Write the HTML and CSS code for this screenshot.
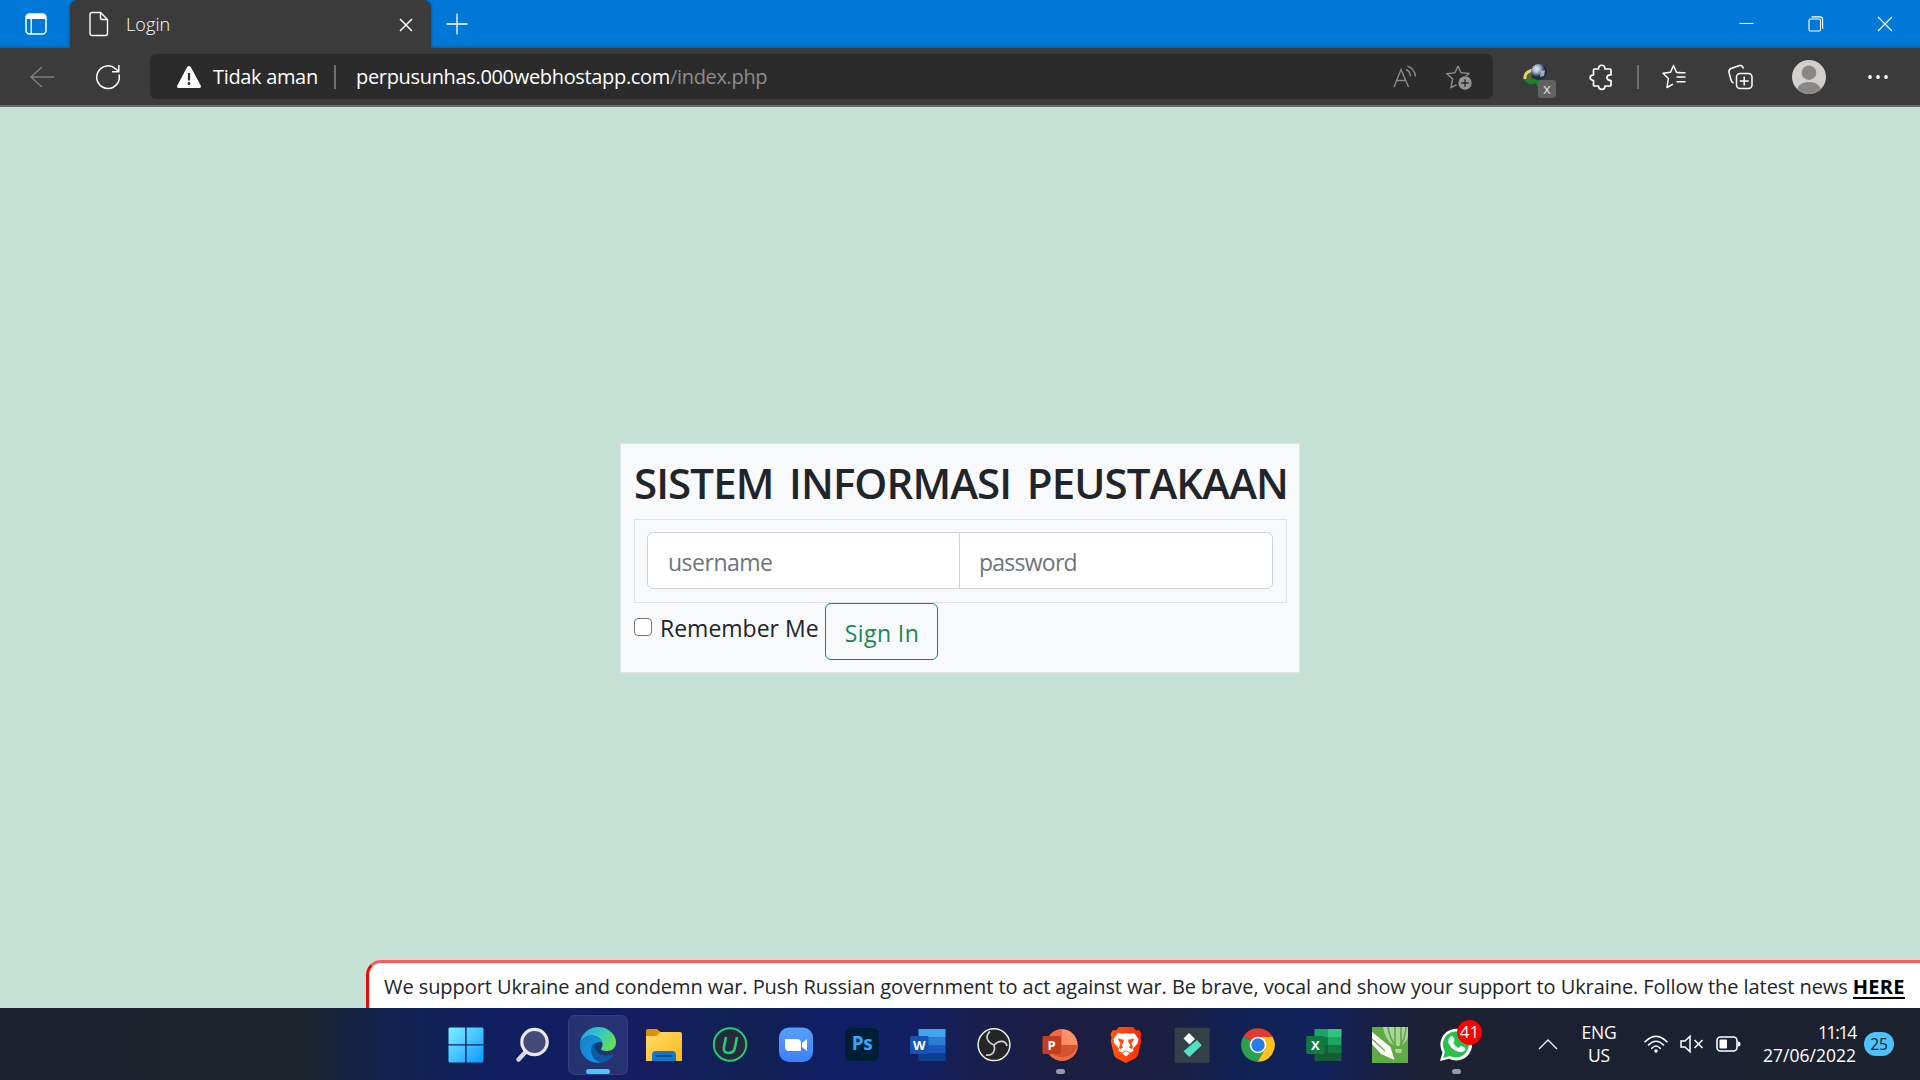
FILE: index.html
```
<!DOCTYPE html>
<html lang="id">
<head>
<meta charset="utf-8">
<title>Login</title>
<link rel="stylesheet" href="styles.css">
</head>
<body>
<header class="tabstrip">
  <svg class="tab-actions" width="22" height="22" viewBox="0 0 22 22"><rect x="1" y="1" width="20" height="20" rx="3.500" fill="none" stroke="#fff" stroke-width="1.500"/><path d="M1 6V4a3 3 0 0 1 3-3h14a3 3 0 0 1 3 3v2z" fill="#fff"/><path d="M6.200 6v15" stroke="#fff" stroke-width="1.300"/></svg>
  <div class="tab">
    <svg width="20" height="26" viewBox="0 0 20 26" fill="none" stroke="#fff" stroke-width="1.400"><path d="M3 1.500h8.500L18.500 8.500V22.500a2 2 0 0 1-2 2H3a2 2 0 0 1-2-2V3.500a2 2 0 0 1 2-2z"/><path d="M11.500 1.500V7a1.500 1.500 0 0 0 1.500 1.500h5.500"/></svg>
    <span class="tab-title">Login</span>
    <svg class="tab-close" width="14" height="14" viewBox="0 0 14 14" stroke="#fff" stroke-width="1.500"><path d="M1 1l12 12M13 1L1 13"/></svg>
  </div>
  <svg class="new-tab" width="22" height="22" viewBox="0 0 22 22" stroke="#fff" stroke-width="1.300"><path d="M11 .5v21M.5 11h21"/></svg>
  <div class="window-controls">
    <svg width="15" height="16" viewBox="0 0 15 16" stroke="#fff"><path d="M.5 7.500h14"/></svg>
    <svg width="16" height="16" viewBox="0 0 16 16" fill="none" stroke="#fff" stroke-width="1.100"><rect x="1" y="3" width="11.500" height="12" rx="1.500"/><path d="M3.500.9h8.300a2.800 2.800 0 0 1 2.800 2.800v9"/></svg>
    <svg width="16" height="16" viewBox="0 0 16 16" stroke="#fff" stroke-width="1.100"><path d="M1 1l14 14M15 1L1 15"/></svg>
  </div>
</header>

<nav class="toolbar">
  <svg class="back" width="24" height="22" viewBox="0 0 24 22" fill="none" stroke="#808080" stroke-width="1.400"><path d="M12 1L1 11l11 10M1 11h23"/></svg>
  <svg class="reload" width="26" height="26" viewBox="0 0 26 26" fill="none" stroke="#fff" stroke-width="1.500"><path d="M24 10.500A11.300 11.300 0 1 1 20.500 4.700L23.800 7.500"/><path d="M23.800 1v6.700H17"/></svg>
  <div class="address">
    <svg class="warn" width="24" height="22" viewBox="0 0 24 22"><path d="M10.200.9Q12-.9 13.800.9L23.700 19.500Q24.500 22 22.300 22H1.700Q-.5 22 .3 19.500z" fill="#fff"/><path d="M12 7v7.500" stroke="#2b2b2b" stroke-width="2.200"/><circle cx="12" cy="17.500" r="1.400" fill="#2b2b2b"/></svg>
    <span class="security">Tidak aman</span>
    <i class="sep"></i>
    <span class="url">perpusunhas.000webhostapp.com<span class="path">/index.php</span></span>
    <svg class="read" width="24" height="24" viewBox="0 0 24 24" fill="none" stroke="#8d8d8d" stroke-width="1.400"><path d="M1 22L8 4.500 15.500 22M3.500 15.500h9.300M13 4.500Q17 6 17.500 11.500M14.500 1.200Q21.500 3.500 22.500 11.500"/></svg>
    <svg class="star" width="26" height="26" viewBox="0 0 26 26"><path d="M12 2L15 8.700 23.500 9.500M12 2L9 8.700 1 9.800 6.600 15 5 23.500 10.500 20.800M23.500 9.500 20 12" fill="none" stroke="#8d8d8d" stroke-width="1.400"/><circle cx="19" cy="19" r="6.700" fill="#949494"/><path d="M19 15.300v7.400M15.300 19h7.400" stroke="#2b2b2b" stroke-width="1.400"/></svg>
  </div>
  <div class="idm">
    <svg width="26" height="26" viewBox="0 0 26 26"><defs><radialGradient id="globe" cx=".35" cy=".3"><stop stop-color="#f4f8ff"/><stop offset=".55" stop-color="#88a3cb"/><stop offset="1" stop-color="#1c2c4b"/></radialGradient></defs><path d="M11 5C1 5-2 14 3 18q4 4 10 1l1 4 5-3-2-7-7 2q-4-1 2-9" fill="#168427"/><path d="M10 6Q1 8 2 15" fill="none" stroke="#e6cf73" stroke-width="3"/><path d="M12 8Q6 10 6 15" fill="none" stroke="#c03931" stroke-width="1.800"/><circle cx="16" cy="8" r="8" fill="url(#globe)"/><path d="M10 4l4 1 1 3-2 1zM18 7l4-1-1 6-4 1z" fill="#d7d4b0" opacity=".75"/></svg>
    <b>x</b>
  </div>
  <svg class="puzzle" width="24" height="26" viewBox="0 0 24 26" fill="none" stroke="#fff" stroke-width="1.700" stroke-linejoin="round"><path d="M5.500 5h4c0-5 6.500-5 6.500 0H21q1 0 1 1v5c-5-1-6 5.500 0 5.500v4.500q0 1-1 1h-5c0 4.500-6.500 4.500-6.500 0h-4q-1 0-1-1v-4.500c-4.500-.5-4.500-5.500 0-5.500V6q0-1 1-1z"/></svg>
  <i class="sep"></i>
  <svg class="favs" width="24" height="25" viewBox="0 0 24 25" fill="none" stroke="#fff" stroke-width="1.500" stroke-linejoin="round"><path d="M18.500 8.600L14.500 8.200 11.500 1.500 8.500 8.200 1 9.300 6.400 14.500 5 23.500 11 20.200M14.500 13h9M14.500 8.700h9M14.500 17.700h9"/></svg>
  <svg class="collections" width="25" height="26" viewBox="0 0 25 26" fill="none" stroke="#fff" stroke-width="1.500"><path d="M5.500 19.200Q3.500 18 3 16L1 8.500Q.5 5.500 3 4.500L11.500 1.600Q14.500 1 15.500 4.500"/><rect x="8.500" y="9.500" width="15.500" height="15" rx="3.500"/><path d="M16.200 12.500v9M11.700 17h9"/></svg>
  <svg class="avatar" width="34" height="34" viewBox="0 0 34 34"><defs><clipPath id="av"><circle cx="17" cy="17" r="17"/></clipPath></defs><g clip-path="url(#av)"><rect width="34" height="34" fill="#d2d0ce"/><circle cx="17" cy="12.700" r="7.300" fill="#8a8886"/><path d="M4 34q1-12 13-12t13 12z" fill="#8a8886"/></g></svg>
  <svg class="more" width="20" height="6" viewBox="0 0 20 6" fill="#fff"><circle cx="2" cy="3" r="1.900"/><circle cx="10" cy="3" r="1.900"/><circle cx="18" cy="3" r="1.900"/></svg>
</nav>

<main class="page">
  <form class="card">
    <h1>SISTEM INFORMASI PEUSTAKAAN</h1>
    <div class="fields">
      <input class="field user" type="text" placeholder="username">
      <input class="field pass" type="password" placeholder="password">
    </div>
    <div class="actions">
      <input class="check" type="checkbox" id="remember">
      <label for="remember">Remember Me</label>
      <button type="button">Sign In</button>
    </div>
  </form>
  <div class="notice">We support Ukraine and condemn war. Push Russian government to act against war. Be brave, vocal and show your support to Ukraine. Follow the latest news <a>HERE</a></div>
</main>

<footer class="taskbar">
  <div class="apps">
    <div class="app"><svg width="36" height="36" viewBox="0 0 36 36"><defs><linearGradient id="win" x2="36" y2="36" gradientUnits="userSpaceOnUse"><stop stop-color="#7df3ff"/><stop offset="1" stop-color="#0c95ff"/></linearGradient></defs><path d="M1.500.5H17.200V17.200H.5V1.500zM18.600.5h16l.9 1V17.200H18.600zM.5 18.600H17.200V35.500H1.500l-1-1zM18.600 18.600H35.500v16l-1 .9H18.600z" fill="url(#win)"/></svg></div>
    <div class="app"><svg width="36" height="36" viewBox="0 0 36 36"><path d="M12 24.500L4.500 32.500" stroke="#d5d7dc" stroke-width="4.500" stroke-linecap="round"/><circle cx="20.500" cy="15" r="12.700" fill="#414a78" stroke="#e9eaee" stroke-width="3.200"/></svg></div>
    <div class="app active"><svg width="36" height="36" viewBox="0 0 36 36"><defs><linearGradient id="e1" y1=".2" y2=".6"><stop stop-color="#27a5e8"/><stop offset=".5" stop-color="#35c6c7"/><stop offset="1" stop-color="#67e34c"/></linearGradient><linearGradient id="e2" y2="1"><stop stop-color="#1683c8"/><stop offset="1" stop-color="#1196ec"/></linearGradient></defs><path d="M12 11H21L24 25 14 27z" fill="#143870"/><path d="M0 18C0 7 9 0 18 0 29 0 36 8 36 15c0 6-4 9-9 9-4 0-6-1-6-2s1.500-2 1.500-4.500C22.500 13 18 8.500 11.500 8.500 6 8.500 1 12 0 18z" fill="url(#e1)"/><path d="M0 18C0 12 6 8.700 11.500 8.700 17 8.700 21.500 12 22.200 15.300 16 13.500 14 18 14 21c0 7 5 13 10 14C11 38.500 0 30 0 18z" fill="url(#e2)"/><path d="M17 15.500C11 17 10.500 22 11.500 26.500 13.500 33 19 36 24 35c4.500-1 8-4.500 9.500-7 .5-1 0-1.300-1-.8C26 30 18 28.500 15.300 22c-.8-2.500 0-5 1.700-6.500z" fill="#0d58a3"/></svg><i class="run"></i></div>
    <div class="app"><svg width="36" height="36" viewBox="0 0 36 36"><defs><linearGradient id="fo" y2="1"><stop stop-color="#ffdb6b"/><stop offset="1" stop-color="#fcb81c"/></linearGradient></defs><path d="M0 4q0-2 2-2h9l4 3.500V12H0z" fill="#d99500"/><path d="M0 9h10.500l4-4H34q2 0 2 2v27H0z" fill="url(#fo)"/><path d="M6 34V28q0-4 4-4h16q4 0 4 4v6z" fill="#1277c8"/><path d="M11 29h14" stroke="#0b4a8c" stroke-width="1.800" stroke-linecap="round"/></svg></div>
    <div class="app"><svg width="36" height="36" viewBox="0 0 36 36"><circle cx="18" cy="17.500" r="16.200" fill="#262a3c" stroke="#23cf73" stroke-width="1.900"/><path d="M14 10L12 20Q10.800 26 16.500 26T23 20L25 10" fill="none" stroke="#23cf73" stroke-width="2.600"/></svg></div>
    <div class="app"><svg width="36" height="36" viewBox="0 0 36 36"><defs><linearGradient id="zo" y2="1" x2="0"><stop stop-color="#57a0f8"/><stop offset="1" stop-color="#3c80ff"/></linearGradient></defs><rect x="1" y=".5" width="34" height="34.500" rx="10" fill="url(#zo)"/><path d="M7 12h12q4 0 4 4v8H11q-4 0-4-4zM24 16l5-4v12l-5-4z" fill="#fff"/></svg></div>
    <div class="app"><div class="ps">Ps</div></div>
    <div class="app"><svg width="36" height="36" viewBox="0 0 36 36"><path d="M8.500 2h27v8h-27z" fill="#41a5ee"/><path d="M8.500 10h27v8h-27z" fill="#2b7cd3"/><path d="M8.500 18h27v8h-27z" fill="#185abd"/><path d="M8.500 26h27v8h-27z" fill="#103f91"/><rect y="9" width="18.500" height="18" rx="1.500" fill="#1853b4"/><text class="office" x="9.200" y="22.500">W</text></svg></div>
    <div class="app"><svg width="36" height="36" viewBox="0 0 36 36"><circle cx="18" cy="17.700" r="15.900" fill="#262527" stroke="#f1f1f1" stroke-width="1.500"/><g fill="none" stroke="#d0d0d0" stroke-width="1.700"><path d="M18 18C9 14 10 8 14 4.500"/><path d="M18 18C24 12 30 14 31 19"/><path d="M18 18C20 26 15 29 10 28"/></g></svg></div>
    <div class="app"><svg width="36" height="36" viewBox="0 0 36 36"><path d="M20 2A16 16 0 0 0 20 34 16 16 0 0 0 36 18z" fill="#ed6c47"/><path d="M20 2a16 16 0 0 1 15.500 16H20z" fill="#ff8f6b"/><path d="M4.500 18h31a16 16 0 0 1-31 0z" fill="#d35230"/><rect x=".5" y="9" width="18.500" height="18" rx="1.500" fill="#c43e1c"/><text class="office" x="9.700" y="22.500">P</text></svg><i class="dot"></i></div>
    <div class="app"><svg width="36" height="36" viewBox="0 0 36 36"><defs><linearGradient id="br" x2="1"><stop stop-color="#ff5a12"/><stop offset="1" stop-color="#ff2a08"/></linearGradient></defs><path d="M11 0h14l3 3.500 3-.5 2.500 4-1 4 .8 3L30 28q-1 2-3 3.500L18 36l-9-4.500Q7 30 6 28L2.700 14l.8-3-1-4L5 3l3 .5z" fill="url(#br)"/><path d="M10 6l4 .8 4-.8 4 .8 4-.8 4.500 6-1 4.500-4.500 5 .5 2.500-3 1.500-4.500-2-4.500 2-3-1.500.5-2.500-4.500-5-1-4.500z" fill="#fff"/><path d="M18 24.300l4 2-4 3.200-4-3.200z" fill="#fff"/><path d="M9.500 11.500l6.500 1.300-.8 3.200-1.500 2 1.300 2.500-2.500 1.500-1.300-1 .3-2.500 1-2zM26.500 11.500L20 12.800l.8 3.200 1.500 2-1.300 2.500 2.500 1.500 1.300-1-.3-2.500-1-2z" fill="#ff4a11"/></svg></div>
    <div class="app"><svg width="36" height="36" viewBox="0 0 36 36"><rect x=".7" y=".7" width="35" height="35" rx="1" fill="#33404a"/><path d="M15 6l6 6-5.500 5.500-6-6z" fill="#fff"/><path d="M23 13l4.800 5.200L15.300 30 9.500 24.200z" fill="#50e3c2"/></svg></div>
    <div class="app"><svg width="36" height="36" viewBox="0 0 36 36"><path d="M18 18L3.400 9.800A16.700 16.700 0 0 1 32.600 9.800z" fill="#e33b2e"/><path d="M18 18L3.400 9.500A16.700 16.700 0 0 0 17.500 34.700L25 22z" fill="#2aa24c"/><path d="M18 9.800H32.600A16.700 16.700 0 0 1 17.500 34.700L25 22z" fill="#fcc31e"/><path d="M18 9.800h14.600L31 8.500H9z" fill="#e33b2e"/><circle cx="18" cy="18" r="8.300" fill="#fff"/><circle cx="18" cy="18" r="6.700" fill="#2b7bea"/></svg></div>
    <div class="app"><svg width="36" height="36" viewBox="0 0 36 36"><path d="M8.500 2h13.500v8H8.500z" fill="#21a366"/><path d="M22 2h13.500v8H22z" fill="#33c481"/><path d="M8.500 10H22v8H8.500z" fill="#107c41"/><path d="M22 10h13.500v8H22z" fill="#21a366"/><path d="M8.500 18h27v16h-27z" fill="#185c37"/><path d="M22 18h13.500v8H22z" fill="#107c41"/><rect x=".2" y="9" width="18.500" height="18" rx="1.500" fill="#107c41"/><text class="office" x="9.400" y="22.500">X</text></svg></div>
    <div class="app"><svg width="36" height="36" viewBox="0 0 36 36"><path d="M0 0h36v36H0z" fill="#61ab45"/><path d="M11 0Q13 14 23 19h6Q36 14 36 8V0z" fill="#acd49c"/><path d="M16 0q2 13 8 19M23 0v19M29 0v19M34 0q-1 13-6 19" fill="none" stroke="#61ab45" stroke-width="1.700"/><path d="M23 22h6.500v4H24z" fill="#acd49c"/><path d="M0 5L18.500 20 22.500 33 9 27 0 17z" fill="#fff"/><path d="M0 12l13 12" stroke="#61ab45" stroke-width="1.200"/></svg></div>
    <div class="app"><svg width="36" height="36" viewBox="0 0 36 36"><path d="M2 34L4.500 25.500A15.900 15.900 0 1 1 11 31.700z" fill="#fff"/><path d="M5 31l2-6.500A13 13 0 1 1 12 29z" fill="#25c14c"/><path d="M12 10q2-2 3.500.5l1 2.500q.3 1-1.300 2.700 2 4 5.500 5.300l2-2q1-.5 4.500 2 1 1-1 3-2.500 2-6.500.500-6.500-2-9.500-9-.5-3.500 1.800-5.500z" fill="#fff"/></svg><b class="count">41</b><i class="dot"></i></div>
  </div>
  <svg class="chevron" width="20" height="12" viewBox="0 0 20 12" fill="none" stroke="#eee" stroke-width="1.400"><path d="M1 11l9-9 9 9"/></svg>
  <div class="lang">ENG<br>US</div>
  <svg class="wifi" width="24" height="18" viewBox="0 0 24 18" fill="none" stroke="#fff" stroke-width="1.600" stroke-linecap="round"><path d="M1 6.800q11-11 22 0M4.500 10q7.500-7.500 15 0M7.800 13.300q4.200-4.500 8.400 0"/><circle cx="12" cy="16" r="1.700" fill="#fff" stroke="none"/></svg>
  <svg class="sound" width="24" height="18" viewBox="0 0 24 18" fill="none" stroke="#fff" stroke-width="1.500"><path d="M1 6h4l5-4.700v15.400L5 12H1zM14.500 5l8 8M22.500 5l-8 8"/></svg>
  <svg class="battery" width="25" height="16" viewBox="0 0 25 16"><rect x="1" y="1" width="20" height="14" rx="3.500" fill="none" stroke="#fff" stroke-width="1.600"/><rect x="3.500" y="3.500" width="7.500" height="9" rx="1" fill="#fff"/><path d="M22 5.500q2.500 0 2.500 2.500T22 10.500z" fill="#fff"/></svg>
  <div class="clock"><span class="time">11:14</span><br>27/06/2022</div>
  <span class="badge">25</span>
</footer>
</body>
</html>
```
FILE: styles.css
```
* { box-sizing: border-box; }
body {
  margin: 0;
  width: 1920px;
  height: 1080px;
  overflow: hidden;
  display: flex;
  flex-direction: column;
  font-family: "Open Sans", "Noto Sans", sans-serif;
  color: #212529;
}
svg { display: block; flex: none; overflow: visible; }

.tabstrip {
  flex: none;
  display: flex;
  align-items: center;
  height: 48px;
  background: linear-gradient(#0078d7 45px, #0066b6 48px);
}
.tab-actions { margin-left: 25px; }
.tab {
  display: flex;
  align-items: center;
  width: 361px;
  height: 48px;
  margin-left: 23px;
  padding: 0 18px 0 19px;
  background: #3b3b3b;
  border-radius: 8px 8px 0 0;
  box-shadow: 0 0 3px #00427a;
  clip-path: inset(0 -4px 0 -4px);
}
.tab-title {
  margin-left: 17px;
  color: #fff;
  font-size: 18px;
  font-weight: 300;
  letter-spacing: .1px;
  line-height: 24px;
}
.tab-close { margin-left: auto; margin-top: 2px; }
.new-tab { margin-left: 15px; }
.window-controls { display: flex; gap: 53px; margin-left: auto; padding-right: 27px; }
.window-controls svg:first-child { margin-right: 1px; }

.toolbar {
  flex: none;
  display: flex;
  align-items: center;
  height: 59px;
  padding-left: 30px;
  background: #3b3b3b;
  border-bottom: 2px solid #6b6b6b;
}
.reload { margin-left: 41px; }
.address {
  display: flex;
  align-items: center;
  width: 1343px;
  height: 45px;
  margin-left: 29px;
  padding-left: 27px;
  background: #2b2b2b;
  border-radius: 6px;
  color: #fff;
  font-size: 20px;
  letter-spacing: -.33px;
  white-space: nowrap;
}
.security { width: 121px; margin-left: 12px; }
.sep { flex: none; width: 2px; height: 24px; background: #6f6f6f; }
.url { margin-left: 20px; }
.path { color: #8d8d8d; }
.read { margin-left: auto; }
.star { margin: 0 21px 0 29px; }
.idm { position: relative; margin-left: 30px; }
.idm b {
  position: absolute;
  left: 15px;
  top: 16px;
  width: 18px;
  height: 18px;
  background: #616161;
  border-radius: 3px;
  color: #ddd;
  font-size: 15px;
  font-weight: 400;
  line-height: 17px;
  text-align: center;
}
.puzzle { margin: 0 24px 0 40px; }
.favs { margin-left: 23px; }
.collections { margin-left: 42px; }
.avatar { margin-left: 39px; }
.more { margin-left: 42px; }

.page {
  position: relative;
  flex: 1;
  display: flex;
  align-items: center;
  justify-content: center;
  background: #c5e1d5;
}
.card {
  width: 680px;
  height: 230px;
  padding: 12px 12px 12px 13px;
  background: #f8f9fa;
  border: 1px solid #dee2e6;
}
h1 {
  height: 63px;
  margin: 0;
  padding-top: 2px;
  font-size: 42px;
  font-weight: 600;
  letter-spacing: -.9px;
  word-spacing: 5.5px;
  line-height: 50px;
  white-space: nowrap;
}
.fields { display: flex; height: 84px; padding: 12px; border: 1px solid #dee2e6; }
.field {
  width: 313px;
  height: 57px;
  padding: 4px 20px 0;
  background: #fff;
  border: 1px solid #ced4da;
  font: 400 23px "Open Sans", sans-serif;
  letter-spacing: -.5px;
}
.field::placeholder { color: #6c757d; opacity: 1; }
.user { border-radius: 6px 0 0 6px; }
.pass { width: 314px; margin-left: -1px; padding-left: 19px; border-radius: 0 6px 6px 0; letter-spacing: -.75px; }
.actions { display: flex; align-items: flex-start; }
.check {
  appearance: none;
  width: 18px;
  height: 18px;
  margin: 15px 8px 0 0;
  background: #fff;
  border: 1.5px solid #767676;
  border-radius: 4px;
}
label { width: 165px; padding-top: 8px; font-size: 23px; letter-spacing: 0; line-height: 34px; white-space: nowrap; }
button {
  width: 113px;
  height: 57px;
  padding: 3px 0 0 1px;
  background: none;
  border: 1px solid #198754;
  border-radius: 6px;
  color: #198754;
  font: 400 23px "Open Sans", sans-serif;
  letter-spacing: .4px;
}
.notice {
  position: absolute;
  right: 0;
  bottom: 0;
  width: 1554px;
  height: 48px;
  padding-left: 15px;
  background: #fff;
  border-top: 3px solid #ff5a61;
  border-left: 3px solid #f00;
  border-top-left-radius: 15px;
  font-size: 20px;
  letter-spacing: -.07px;
  line-height: 47px;
  white-space: nowrap;
}
.notice a {
  display: inline-block;
  height: 24px;
  border-bottom: 2px solid #000;
  color: #000;
  font-weight: 700;
  letter-spacing: .2px;
  line-height: 23px;
}

.taskbar {
  flex: none;
  display: flex;
  align-items: center;
  height: 72px;
  padding-left: 433px;
  background: linear-gradient(90deg, #1b212d 0, #1c252e 300px, #14233f 345px, #11234d 380px, #101f5d 480px, #111e65 620px, #171c5e 650px, #11225a 700px, #102052 760px, #111f66 830px, #111f63 910px, #191e4e 980px, #1b1e40 1080px, #1a2043 1180px, #102153 1230px, #10225c 1320px, #171f46 1370px, #1c2133 1430px, #1b222e 100%);
}
.apps { display: flex; }
.app {
  position: relative;
  display: flex;
  align-items: center;
  justify-content: center;
  width: 66px;
  height: 72px;
  padding-top: 2px;
}
.active::before {
  content: "";
  position: absolute;
  inset: 7px 3px 5px;
  background: rgba(255, 255, 255, .09);
  border: 1px solid rgba(255, 255, 255, .07);
  border-radius: 7px;
}
.active svg { position: relative; }
.run, .dot { position: absolute; left: 21px; bottom: 6px; width: 24px; height: 5px; background: #4cc2ff; border-radius: 3px; }
.dot { left: 29px; width: 9px; background: #9a9ba6; }
.ps {
  width: 34px;
  height: 33px;
  margin-top: -2px;
  background: #001e36;
  border-radius: 6px;
  color: #31a8ff;
  font-size: 19px;
  font-weight: 700;
  letter-spacing: -.5px;
  line-height: 30px;
  text-align: center;
}
.office { fill: #fff; font: 700 13px "Open Sans", sans-serif; text-anchor: middle; }
.count {
  position: absolute;
  left: 34px;
  top: 12px;
  width: 25px;
  height: 25px;
  background: #f00;
  border-radius: 50%;
  color: #fff;
  font-size: 17px;
  font-weight: 400;
  line-height: 24px;
  text-align: center;
}
.chevron { margin-left: 49px; }
.lang, .clock { color: #fff; font-size: 17.5px; line-height: 23px; }
.lang { width: 44px; margin-left: 19px; text-align: center; letter-spacing: -.2px; }
.wifi { margin-left: 23px; }
.sound { margin-left: 12px; }
.battery { margin-left: 12px; }
.clock { width: 100px; margin-left: 15px; text-align: right; }
.time { letter-spacing: -1.3px; }
.badge {
  width: 30px;
  height: 24px;
  margin-left: 8px;
  background: #4cc2ff;
  border-radius: 12px;
  color: #10202c;
  font-size: 15.5px;
  line-height: 24px;
  text-align: center;
}
```
